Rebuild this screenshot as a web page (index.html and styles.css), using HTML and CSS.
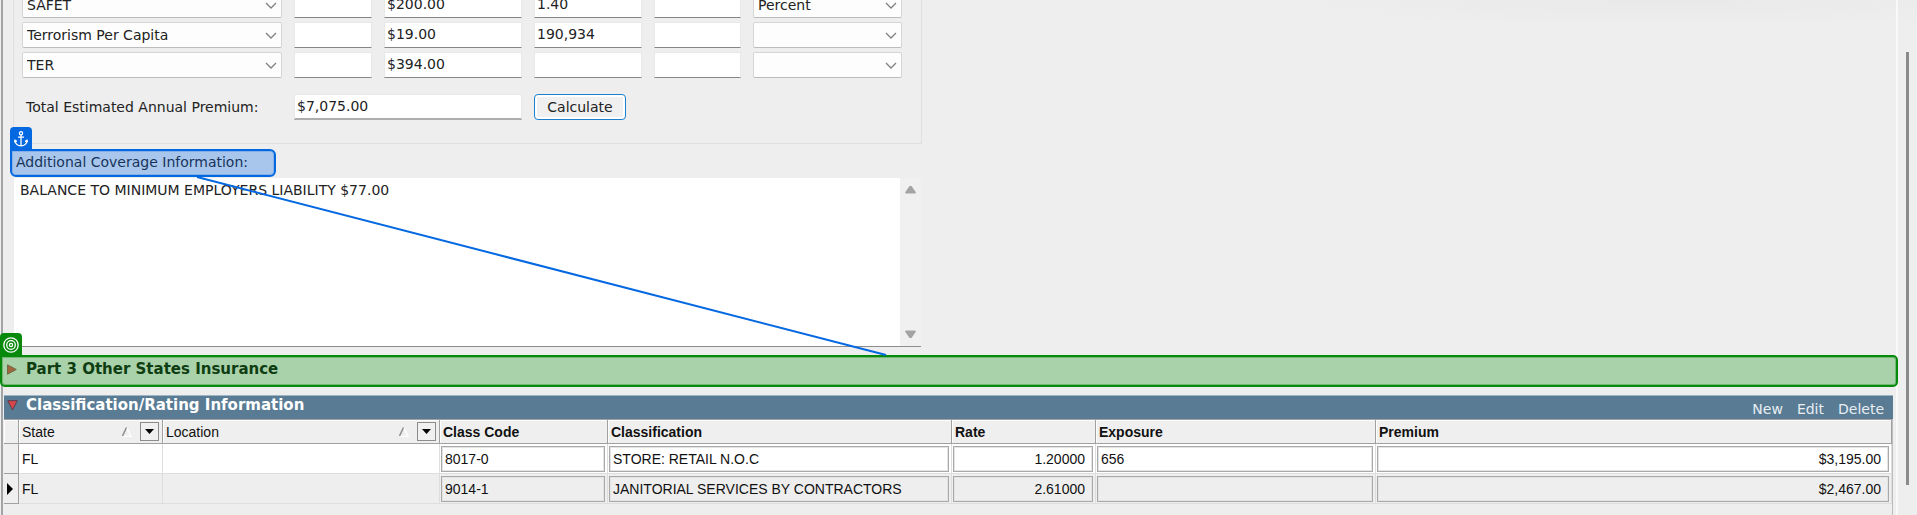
FILE: index.html
```html
<!DOCTYPE html>
<html lang="en">
<head>
<meta charset="utf-8">
<title>Workers Compensation Coverage</title>
<link rel="stylesheet" href="styles.css">
</head>
<body>
<div class="window">
  <main class="panel">
    <form class="group">
      <div class="grid">
        <select class="combo" aria-label="Rating item 1"><option>SAFET</option></select>
        <input class="field" type="text" aria-label="Code 1">
        <input class="field" type="text" aria-label="Amount 1" value="$200.00">
        <input class="field" type="text" aria-label="Rate 1" value="1.40">
        <input class="field" type="text" aria-label="Factor 1">
        <select class="combo" aria-label="Unit 1"><option>Percent</option></select>
        <select class="combo" aria-label="Rating item 2"><option>Terrorism Per Capita</option></select>
        <input class="field" type="text" aria-label="Code 2">
        <input class="field" type="text" aria-label="Amount 2" value="$19.00">
        <input class="field" type="text" aria-label="Rate 2" value="190,934">
        <input class="field" type="text" aria-label="Factor 2">
        <select class="combo" aria-label="Unit 2"><option></option></select>
        <select class="combo" aria-label="Rating item 3"><option>TER</option></select>
        <input class="field" type="text" aria-label="Code 3">
        <input class="field" type="text" aria-label="Amount 3" value="$394.00">
        <input class="field" type="text" aria-label="Rate 3">
        <input class="field" type="text" aria-label="Factor 3">
        <select class="combo" aria-label="Unit 3"><option></option></select>
      </div>
      <div class="grid total">
        <label class="total-label" for="premium">Total Estimated Annual Premium:</label>
        <input class="field total-field" id="premium" type="text" value="$7,075.00">
        <button class="calculate" type="button">Calculate</button>
      </div>
    </form>

    <div class="anchor">
      <span class="badge badge-anchor">
        <svg width="14" height="16" viewBox="0 0 14 16" fill="none" stroke="#fff" stroke-width="1.3" aria-hidden="true">
          <circle cx="7" cy="2.3" r="1.6"/>
          <path d="M7 4v11M4 6.2h6M1 9.5c.3 3.300 2.800 5.200 6 5.400 3.200-.2 5.700-2.100 6-5.400M.4 11.300 1 9.300l1.900 1M13.600 11.300 13 9.300l-1.900 1"/>
        </svg>
      </span>
      <label for="coverage">Additional Coverage Information:</label>
    </div>

    <div class="memo">
      <textarea id="coverage">BALANCE TO MINIMUM EMPLOYERS LIABILITY $77.00</textarea>
      <div class="memo-scroll">
        <button type="button" aria-label="Scroll up"><svg width="11" height="9" viewBox="0 0 11 9"><path d="M4.500 1h2L11 7.500 10.300 8.500H.7L0 7.500z" fill="#a3a3a3"/></svg></button>
        <button type="button" aria-label="Scroll down"><svg width="11" height="9" viewBox="0 0 11 9"><path d="M4.500 8h2L11 1.500 10.300.5H.7L0 1.500z" fill="#a3a3a3"/></svg></button>
      </div>
    </div>

    <section class="target">
      <span class="badge badge-target">
        <svg width="16" height="16" viewBox="0 0 16 16" fill="none" stroke="#fff" stroke-width="1.300" aria-hidden="true">
          <circle cx="8" cy="8" r="7.200"/><circle cx="8" cy="8" r="4.300"/><circle cx="8" cy="8" r="1.600"/>
        </svg>
      </span>
      <svg class="twisty" width="10" height="11" viewBox="0 0 10 11" aria-hidden="true"><path d="M.5 .8 9.300 5.500.5 10.200z" fill="#a0673f" stroke="#6f6a45"/></svg>
      <h2>Part 3 Other States Insurance</h2>
    </section>

    <section class="rating">
      <header class="bar">
        <svg class="twisty" width="11" height="11" viewBox="0 0 11 11" aria-hidden="true"><path d="M.8 .7h9.400L5.500 10z" fill="#d8454a" stroke="#5b3b4c"/></svg>
        <h2>Classification/Rating Information</h2>
        <nav><a href="#new">New</a><a href="#edit">Edit</a><a href="#delete">Delete</a></nav>
      </header>
      <table>
        <colgroup><col class="c-mark"><col class="c-state"><col class="c-location"><col class="c-code"><col class="c-class"><col class="c-rate"><col class="c-exposure"><col></colgroup>
        <thead>
          <tr>
            <th></th>
            <th class="plain"><div class="head"><span>State</span><svg class="sort" width="10" height="10" viewBox="0 0 10 10" aria-hidden="true"><path d="M4.500.5 9 9.300H1" stroke="#fff" fill="none" stroke-width="1.300"/><path d="M.5 9 4.500 .5" stroke="#8c8c8c" stroke-width="1.500"/></svg><button type="button" aria-label="Filter state"><svg width="9" height="5" viewBox="0 0 9 5"><path d="M0 0h9L4.500 5z"/></svg></button></div></th>
            <th class="plain"><div class="head"><span>Location</span><svg class="sort" width="10" height="10" viewBox="0 0 10 10" aria-hidden="true"><path d="M4.500.5 9 9.300H1" stroke="#fff" fill="none" stroke-width="1.300"/><path d="M.5 9 4.500 .5" stroke="#8c8c8c" stroke-width="1.500"/></svg><button type="button" aria-label="Filter location"><svg width="9" height="5" viewBox="0 0 9 5"><path d="M0 0h9L4.500 5z"/></svg></button></div></th>
            <th>Class Code</th><th>Classification</th><th>Rate</th><th>Exposure</th><th>Premium</th>
          </tr>
        </thead>
        <tbody>
          <tr>
            <td class="mark"></td><td class="text">FL</td><td class="text"></td>
            <td><input type="text" aria-label="Class code" value="8017-0"></td>
            <td><input type="text" aria-label="Classification" value="STORE: RETAIL N.O.C"></td>
            <td><input class="num" type="text" aria-label="Rate" value="1.20000"></td>
            <td><input type="text" aria-label="Exposure" value="656"></td>
            <td><input class="num" type="text" aria-label="Premium" value="$3,195.00"></td>
          </tr>
          <tr class="current">
            <td class="mark"><svg width="6" height="12" viewBox="0 0 6 12" aria-label="Current row"><path d="M0 0l6 6-6 6z"/></svg></td><td class="text">FL</td><td class="text"></td>
            <td><input type="text" aria-label="Class code" value="9014-1"></td>
            <td><input type="text" aria-label="Classification" value="JANITORIAL SERVICES BY CONTRACTORS"></td>
            <td><input class="num" type="text" aria-label="Rate" value="2.61000"></td>
            <td><input type="text" aria-label="Exposure"></td>
            <td><input class="num" type="text" aria-label="Premium" value="$2,467.00"></td>
          </tr>
        </tbody>
      </table>
    </section>
    <svg class="link" width="922" height="360" viewBox="0 0 922 360" aria-hidden="true"><path d="M197 177 886 355" stroke="#0468e1" stroke-width="2"/></svg>
  </main>
  <div class="scrollbar"><div class="thumb"></div></div>
</div>
</body>
</html>
```
FILE: styles.css
```css
* { box-sizing: border-box; }
body {
  margin: 0;
  background: #eee;
  color: #222;
  font: 14px/18px "DejaVu Sans", Verdana, sans-serif;
}
input, select, textarea, button { font: inherit; color: inherit; margin: 0; }
h2 { margin: 0; font-size: 15px; line-height: 20px; }

.window {
  display: flex;
  height: 100vh;
  overflow: hidden;
  background: radial-gradient(ellipse 420px 28px at 87% 0, #e9e9e9, #eee);
}
.panel {
  position: relative;
  flex: 1;
  min-width: 0;
  border-right: 2px solid #f9f9f9;
}
.panel::before {
  content: "";
  position: absolute;
  inset: 0 auto 0 1px;
  width: 2px;
  background: #a2a4a6;
}

/* rating items */
.group {
  width: 909px;
  margin: -8px 0 0 13px;
  padding: 0 8px 23px;
  border: 1px solid #dfdfdf;
  border-top: 0;
}
.grid {
  display: grid;
  grid-template-columns: 260px 78px 138px 108px 87px 149px;
  grid-auto-rows: 26px;
  gap: 4px 12px;
}
.field {
  width: 100%;
  min-width: 0;
  padding: 0 2px 2px;
  border: 1px solid #e8e8e8;
  border-bottom-color: #868686;
  background: #fff;
}
.combo {
  width: 100%;
  appearance: none;
  padding: 0 20px 0 4px;
  border: 1px solid #d6d6d6;
  border-bottom-color: #bcbcbc;
  border-radius: 2px;
  background: #fdfdfd url("data:image/svg+xml,%3Csvg xmlns='http://www.w3.org/2000/svg' width='12' height='7'%3E%3Cpath d='M1 1l5 5 5-5' fill='none' stroke='%23808080' stroke-width='1.3'/%3E%3C/svg%3E") no-repeat right 4px center;
}
.total { margin-top: 16px; }
.total-label { padding: 4px 0 0 4px; white-space: nowrap; }
.total-field { grid-column: 2 / 4; border-bottom: 2px solid #adadad; }
.calculate {
  width: 92px;
  padding: 0;
  border: 1px solid #1b80d0;
  border-radius: 4px;
  background: #f0f0f0;
  box-shadow: inset 0 0 0 2px #fff;
}

/* linked markers */
.badge {
  position: absolute;
  left: -2px;
  bottom: 100%;
  display: grid;
  place-items: center;
  width: 22px;
  height: 24px;
  border-radius: 4px 4px 0 0;
}
.badge-anchor { background: #0468e1; }
.badge-target { background: #078a0c; }
.anchor {
  position: relative;
  width: 266px;
  height: 28px;
  margin: 5px 0 0 10px;
  padding: 2px 4px;
  border: 2px solid #0468e1;
  border-radius: 0 6px 6px 6px;
  background: #a8c6eb;
  box-shadow: inset 0 0 0 1px #85b0e8;
  color: #17335c;
  white-space: nowrap;
}
.target {
  position: relative;
  display: flex;
  gap: 9px;
  height: 32px;
  margin: 8px -2px 0 0;
  padding: 2px 5px;
  border: 2px solid #078a0c;
  border-radius: 0 5px 5px 5px;
  background: #a9d2aa;
  box-shadow: inset 0 0 0 1px #72b874;
  color: #0f3d12;
}
.twisty { margin-top: 5px; }
.link { position: absolute; left: 0; top: 0; pointer-events: none; }

.memo {
  display: flex;
  width: 907px;
  height: 169px;
  margin: 1px 0 0 14px;
  border-bottom: 1px solid #8d8d8d;
}
.memo textarea {
  flex: 1;
  padding: 3px 6px;
  border: 0;
  resize: none;
  overflow: hidden;
  background: #fff;
}
.memo-scroll {
  display: flex;
  flex-direction: column;
  justify-content: space-between;
  width: 21px;
  padding: 7px 0;
  background: #f0f0f0;
}
.memo-scroll button { padding: 0; border: 0; background: none; line-height: 0; }

/* rating table */
.rating {
  margin: 8px 3px 0 4px;
  height: 130px;
  border-right: 1px solid #bcbcbc;
}
.bar {
  display: flex;
  gap: 8px;
  height: 24px;
  margin-right: -1px;
  padding: 0 9px 0 3px;
  border-top: 1px solid #9fb4c3;
  background: #597c94;
  color: #fff;
}
.bar h2 { line-height: 19px; }
.bar .twisty { margin-top: 4px; }
.bar nav { display: flex; gap: 14px; margin-left: auto; padding-top: 4px; }
.bar a { color: #e8eef2; text-decoration: none; }

table {
  width: 100%;
  border-collapse: separate;
  border-spacing: 0;
  table-layout: fixed;
  color: #111;
  font: 14px/18px "Liberation Sans", Arial, sans-serif;
}
.c-mark { width: 15px; }
.c-state { width: 144px; }
.c-location { width: 277px; }
.c-code { width: 168px; }
.c-class { width: 344px; }
.c-rate { width: 144px; }
.c-exposure { width: 280px; }
th {
  height: 25px;
  padding: 0 3px;
  border: solid #a0a0a0;
  border-width: 1px 1px 1px 0;
  background: #efefef;
  box-shadow: inset 1px 1px #fff;
  text-align: left;
}
th.plain { font-weight: normal; }
.head { display: flex; align-items: center; gap: 8px; }
.head span { flex: 1; }
.head button {
  display: grid;
  place-items: center;
  width: 19px;
  height: 19px;
  padding: 0;
  border: 1px solid #8c8c8c;
  background: #f0f0f0;
}
td {
  height: 30px;
  padding: 1px 2px 0 1px;
  border: solid #dedede;
  border-width: 0 1px 1px 0;
  background: #fff;
}
td.text { padding-left: 3px; }
.current td { background: #eee; }
td.mark, .current td.mark {
  padding: 0 3px;
  border-color: #a0a0a0;
  background: #efefef;
  line-height: 0;
}
td input {
  display: block;
  width: 100%;
  height: 26px;
  padding: 0 3px;
  border: 1px solid #a9a9a9;
  background: inherit;
  box-shadow: inset 0 0 0 1px #e3e3e3;
}
td .num { padding-right: 7px; text-align: right; }

.scrollbar { width: 19px; padding: 52px 8px 30px; }
.thumb { width: 3px; height: 100%; background: #8a8a8a; }
```
